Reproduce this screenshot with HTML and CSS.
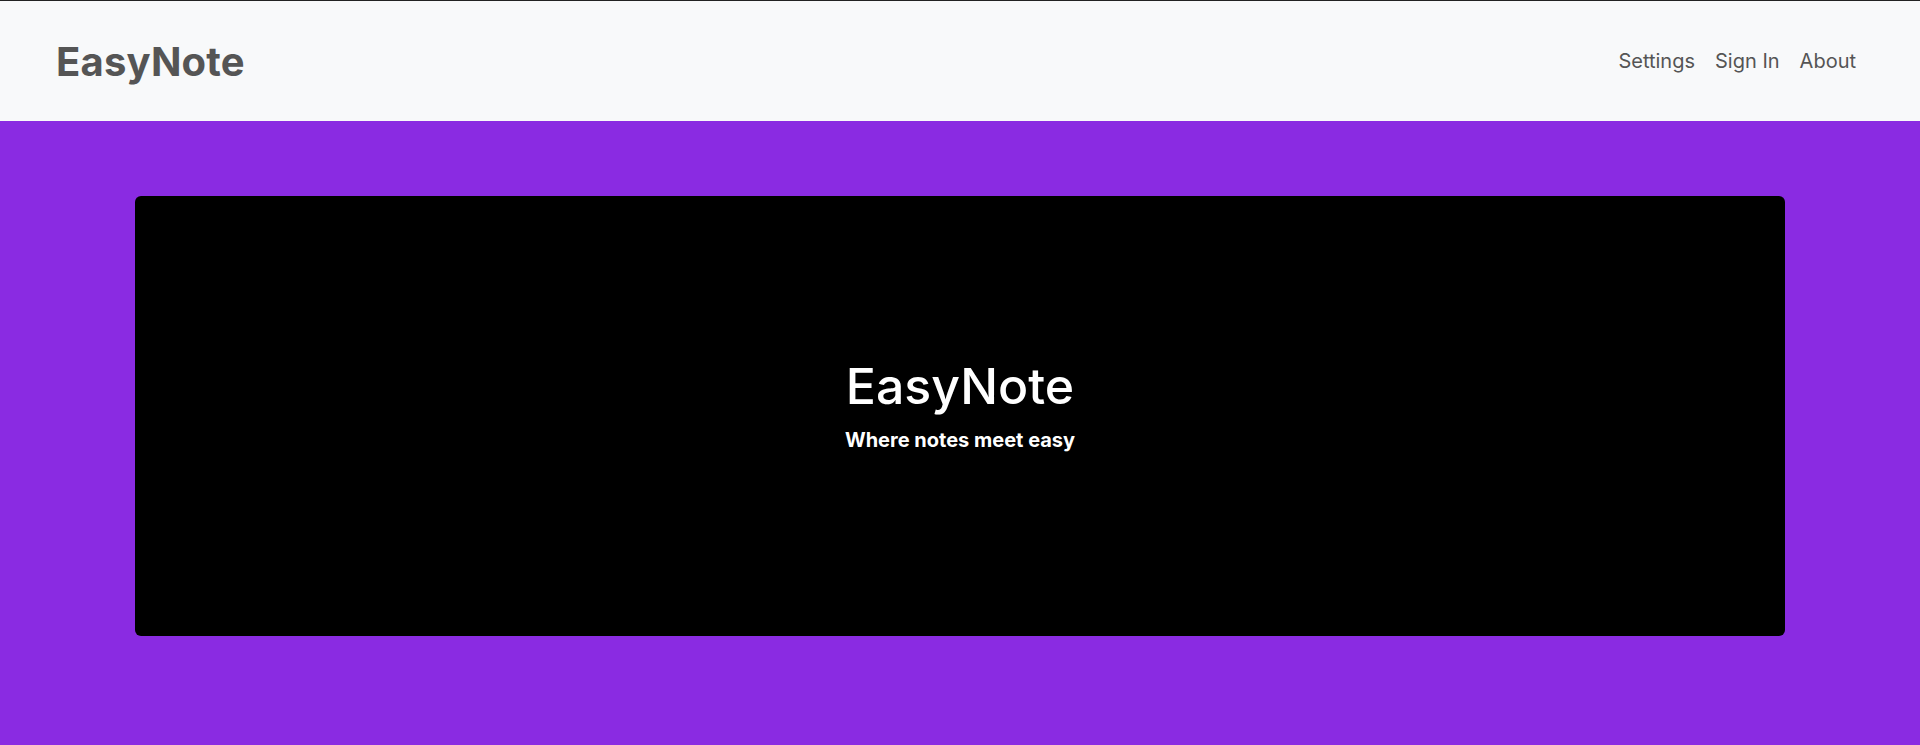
FILE: index.html
```html
<!DOCTYPE html>
<html>
<head>
<meta charset="utf-8">
<link rel="stylesheet" href="styles.css">
</head>
<body>
<header class="topbar">
  <a class="brand" href="#">EasyNote</a>
  <nav class="nav">
    <a href="#">Settings</a>
    <a href="#">Sign In</a>
    <a href="#">About</a>
  </nav>
</header>
<main class="main">
  <section class="hero">
    <h1 class="hero-title">EasyNote</h1>
    <p class="hero-sub">Where notes meet easy</p>
  </section>
</main>
</body>
</html>
```
FILE: styles.css
```css
* { box-sizing: border-box; }
html, body { margin: 0; padding: 0; }
body {
  font-family: Inter, "Noto Sans", sans-serif;
  background: #8a2be2;
  min-height: 745px;
}
.topbar {
  height: 121px;
  border-top: 1px solid #222;
  background: #f8f9fa;
  display: flex;
  align-items: center;
  justify-content: space-between;
  padding: 0 64px 0 56px;
}
.brand {
  color: #555;
  text-decoration: none;
  font-weight: 700;
  font-size: 40px;
  letter-spacing: 0.2px;
}
.nav { display: flex; gap: 20px; }
.nav a {
  color: #555;
  text-decoration: none;
  font-size: 20px;
}
.main { padding: 75px 135px; }
.hero {
  background: #000;
  border-radius: 6px;
  height: 440px;
  padding-bottom: 24px;
  display: flex;
  flex-direction: column;
  align-items: center;
  justify-content: center;
  color: #fff;
}
.hero-title {
  margin: 0;
  font-size: 50px;
  font-weight: 500;
  line-height: 1.2;
}
.hero-sub {
  margin: 12px 0 0;
  font-size: 20px;
  font-weight: 700;
}
```
